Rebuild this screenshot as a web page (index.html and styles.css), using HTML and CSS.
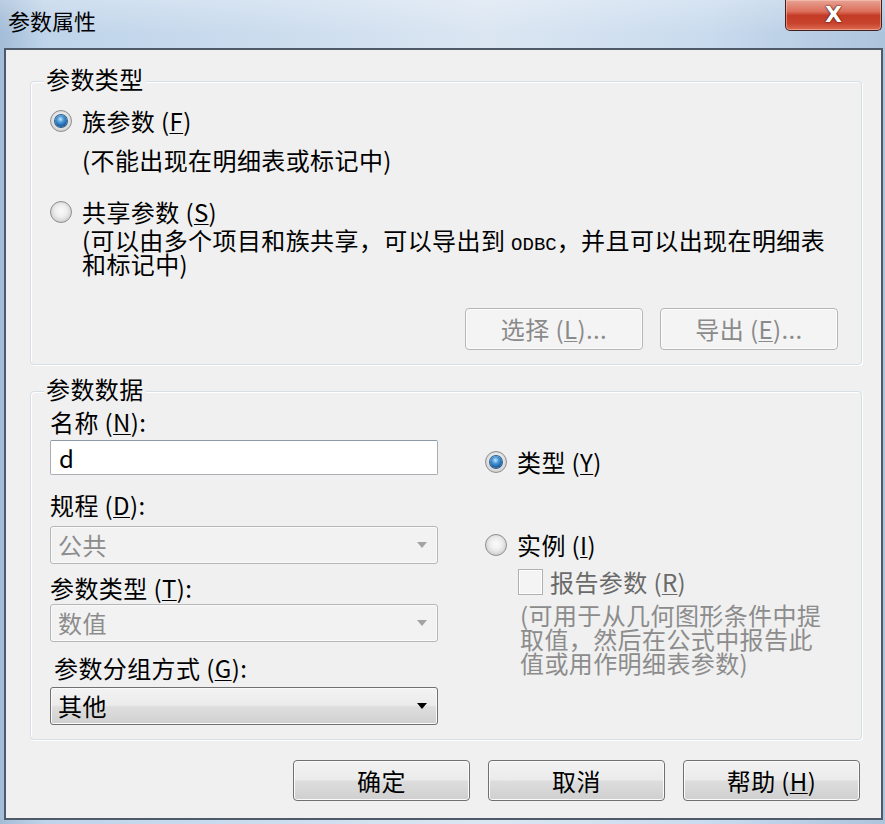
FILE: index.html
```html
<!DOCTYPE html>
<html lang="zh-CN">
<head>
<meta charset="utf-8">
<title>参数属性</title>
<link rel="stylesheet" href="styles.css">
</head>
<body>
<div class="window">
  <div class="titlebar">
    <span class="title">参数属性</span>
    <button class="close" type="button">X</button>
  </div>
  <div class="client">
    <section class="group group-type">
      <div class="legend">参数类型</div>
      <div class="radio-row row-family"><span class="radio checked"></span><span>族参数 (<u>F</u>)</span></div>
      <p class="note note-family">(不能出现在明细表或标记中)</p>
      <div class="radio-row row-shared"><span class="radio"></span><span>共享参数 (<u>S</u>)</span></div>
      <p class="note note-shared">(可以由多个项目和族共享，可以导出到 <span class="mono">ODBC</span>，并且可以出现在明细表<br>和标记中)</p>
      <div class="group-actions">
        <button class="btn btn-disabled" type="button" disabled>选择 (<u>L</u>)...</button>
        <button class="btn btn-disabled" type="button" disabled>导出 (<u>E</u>)...</button>
      </div>
    </section>

    <section class="group group-data">
      <div class="legend">参数数据</div>
      <div class="data-body">
        <div class="col-left">
          <div class="field-label label-name">名称 (<u>N</u>):</div>
          <div class="textbox">d</div>
          <div class="field-label label-disc">规程 (<u>D</u>):</div>
          <div class="combo combo-disabled combo-disc"><span>公共</span><span class="arrow"></span></div>
          <div class="field-label label-ptype">参数类型 (<u>T</u>):</div>
          <div class="combo combo-disabled combo-ptype"><span>数值</span><span class="arrow"></span></div>
          <div class="field-label label-grp">参数分组方式 (<u>G</u>):</div>
          <div class="combo combo-grp"><span>其他</span><span class="arrow"></span></div>
        </div>
        <div class="col-right">
          <div class="radio-row row-typeparam"><span class="radio checked"></span><span>类型 (<u>Y</u>)</span></div>
          <div class="radio-row row-instance"><span class="radio"></span><span>实例 (<u>I</u>)</span></div>
          <div class="check-row"><span class="checkbox"></span><span>报告参数 (<u>R</u>)</span></div>
          <p class="note-right">(可用于从几何图形条件中提<br>取值，然后在公式中报告此<br>值或用作明细表参数)</p>
        </div>
      </div>
    </section>

    <div class="dialog-actions">
      <button class="btn" type="button">确定</button>
      <button class="btn" type="button">取消</button>
      <button class="btn" type="button">帮助 (<u>H</u>)</button>
    </div>
  </div>
</div>
</body>
</html>
```

FILE: styles.css
```css
* { box-sizing: border-box; }
html, body { margin: 0; padding: 0; overflow: hidden; }
body {
  width: 885px;
  height: 824px;
  font-family: "Noto Sans CJK SC", "Noto Sans", sans-serif;
  font-size: 24px;
  font-weight: 400;
  line-height: 24px;
  letter-spacing: 0.4px;
  color: #000;
  background: #a9bfd7;
}
u { text-decoration-thickness: 1px; text-underline-offset: 2px; }
p { margin: 0; }
.mono { font-family: "Liberation Mono", monospace; font-size: 19px; letter-spacing: 0; line-height: 0; }

.window {
  width: 885px;
  height: 824px;
  display: flex;
  flex-direction: column;
  background: linear-gradient(90deg, #a3bcd7 0, #bfd4ea 5%, #cbdcee 30%, #dbe6f2 55%, #c9dbee 80%, #adc4dd 100%);
}

.titlebar {
  height: 48px;
  flex: none;
  display: flex;
  justify-content: space-between;
  align-items: flex-start;
  padding-left: 8px;
  background: linear-gradient(180deg, rgba(255,255,255,.25), rgba(255,255,255,0) 70%);
}
.title { font-size: 22px; line-height: 24px; margin-top: 8px; letter-spacing: 0; }
.close {
  width: 97px;
  height: 31px;
  margin-right: 3px;
  padding: 0;
  border: 1px solid #43201a;
  border-top: 0;
  border-radius: 0 0 5px 5px;
  background: linear-gradient(180deg, #e8a394 0%, #dc6f5b 38%, #c43b26 52%, #c9432d 78%, #dd6c52 100%);
  box-shadow: inset 0 0 0 1px rgba(255,215,205,.45);
  color: #fff;
  font: bold 22px/26px "DejaVu Sans", sans-serif;
  text-shadow: 0 0 2px #3a0a05, 0 0 1px #3a0a05;
}

.client {
  flex: 1;
  margin: 0 2px 4px 4px;
  border: 2px solid #4e5a69;
  background: #f0f0f0;
  padding: 31px 19px 0 24px;
  display: flex;
  flex-direction: column;
}

.group {
  border: 1px solid #d5dfe5;
  border-radius: 4px;
  box-shadow: inset 1px 1px 0 #fff, 1px 1px 0 #fff;
  padding: 0 23px 14px 19px;
}
.legend {
  width: fit-content;
  margin: -15px 0 0 -6px;
  padding: 0 2px;
  background: #f0f0f0;
}

.radio-row {
  display: flex;
  align-items: center;
  gap: 10px;
  height: 26px;
  line-height: 26px;
}
.radio {
  width: 22px;
  height: 22px;
  flex: none;
  border-radius: 50%;
  border: 1px solid #8d8f91;
  background: radial-gradient(circle at 50% 45%, #fbfbfb 0, #eeeeee 40%, #d2d2d2 72%, #b3b3b3 100%);
  display: flex;
  align-items: center;
  justify-content: center;
}
.radio.checked::after {
  content: "";
  width: 12px;
  height: 12px;
  border-radius: 50%;
  background: radial-gradient(circle at 45% 35%, #c4e6fb 0, #4a9ad8 32%, #1a5fa3 68%, #0d3b6e 100%);
  box-shadow: 0 0 0 1px #2e5c88;
}

.note { margin-left: 32px; white-space: nowrap; }
.row-family { margin-top: 17px; }
.note-family { margin-top: 14px; }
.row-shared { margin-top: 27px; }
.note-shared { margin-top: 3px; }

.group-actions {
  display: flex;
  justify-content: flex-end;
  gap: 17px;
  margin-top: 32px;
}

.btn {
  width: 177px;
  height: 41px;
  padding: 0;
  font: inherit;
  letter-spacing: inherit;
  color: #000;
  border: 1px solid #707070;
  border-radius: 4px;
  background: linear-gradient(180deg, #f2f2f2 0%, #ebebeb 48%, #dddddd 52%, #cfcfcf 100%);
  box-shadow: inset 0 0 0 1px #fbfbfb;
}
.group-actions .btn { width: 178px; height: 42px; }
.btn-disabled {
  color: #8a8a8a;
  border-color: #b3b7ba;
  background: #f4f4f4;
  box-shadow: inset 0 0 0 1px #fcfcfc;
}

.group-data { margin-top: 26px; }
.data-body {
  display: grid;
  grid-template-columns: 388px 1fr;
  column-gap: 47px;
}
.col-left, .col-right { display: flex; flex-direction: column; }

.label-name { margin-top: 9px; }
.textbox {
  margin-top: 6px;
  height: 35px;
  border: 1px solid #abadb3;
  border-top-color: #8e99a6;
  border-radius: 2px;
  background: #fff;
  padding-left: 8px;
  line-height: 33px;
}
.label-disc { margin-top: 18px; }
.combo-disc { margin-top: 9px; }
.label-ptype { margin-top: 12px; }
.combo-ptype { margin-top: 4px; }
.label-grp { margin-top: 14px; margin-left: 4px; }
.combo-grp { margin-top: 7px; height: 40px; }

.combo {
  height: 38px;
  display: flex;
  align-items: center;
  justify-content: space-between;
  padding: 0 10px 0 7px;
  border-radius: 3px;
  border: 1px solid #707070;
  background: linear-gradient(180deg, #f3f3f3 0%, #ebebeb 48%, #dedede 52%, #d0d0d0 100%);
  box-shadow: inset 0 0 0 1px #fafafa;
}
.combo-disabled {
  border-color: #b4b8bb;
  background: #f2f2f2;
  color: #8c8c8c;
}
.arrow {
  width: 0;
  height: 0;
  border-left: 5px solid transparent;
  border-right: 5px solid transparent;
  border-top: 6px solid #000;
}
.combo-disabled .arrow { border-top-color: #a3a3a3; }

.row-typeparam { margin-top: 48px; }
.row-instance { margin-top: 57px; }
.check-row {
  margin-top: 11px;
  margin-left: 33px;
  display: flex;
  align-items: center;
  gap: 7px;
  height: 26px;
  color: #6a6a6a;
}
.checkbox {
  width: 25px;
  height: 26px;
  border: 1px solid #b1b1b1;
  background: #f4f4f4;
  box-shadow: inset 0 0 0 1px #fdfdfd;
}
.note-right {
  margin-top: 8px;
  margin-left: 35px;
  white-space: nowrap;
  color: #8c8c8c;
}

.dialog-actions {
  display: flex;
  justify-content: flex-end;
  gap: 18px;
  margin-top: 20px;
  margin-right: 2px;
}
```
